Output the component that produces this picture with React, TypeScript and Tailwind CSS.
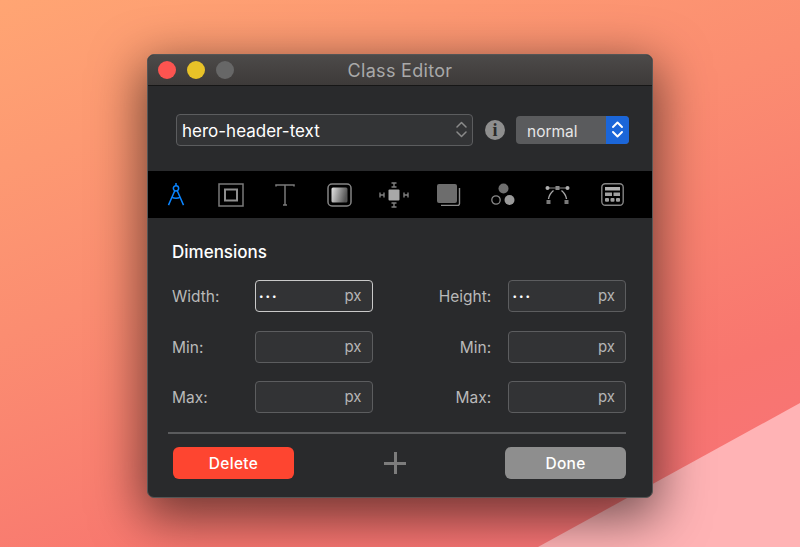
import React from "react";

const F = "font-['Inter','Liberation_Sans',sans-serif]";

function Field({ dots, active }: { dots?: boolean; active?: boolean }) {
  return (
    <div
      className={`flex h-[32px] w-[118px] items-center justify-between rounded-[4px] border-[1.5px] bg-[#323335] pl-[3px] pr-[10px] ${
        active ? "border-[#c9c9c9]" : "border-[#5c5d5f]"
      }`}
    >
      <span className="pb-[7px] text-[15px] font-bold leading-none tracking-[1.5px] text-white">{dots ? "..." : ""}</span>
      <span className="text-[15px] text-[#b5b5b5]">px</span>
    </div>
  );
}

function Row({ left, right, dots, active, mt }: { left: string; right: string; dots?: boolean; active?: boolean; mt: string }) {
  return (
    <div className={`flex items-center ${mt}`}>
      <span className="w-[83px] pt-[2px] text-[15.5px] text-[#b9b9b9]">{left}</span>
      <Field dots={dots} active={active} />
      <span className="w-[136px] pr-[17px] pt-[2px] text-right text-[15.5px] text-[#b9b9b9]">{right}</span>
      <Field dots={dots} />
    </div>
  );
}

const Compass = () => (
  <svg width="18" height="23" viewBox="0 0 20 26" fill="none" stroke="#0a84ff" strokeWidth="1.7">
    <path d="M10 0v3" />
    <circle cx="10" cy="6" r="3" />
    <path d="M8.6 8.7 1.5 25M11.4 8.7 18.5 25M5 16c3 1.5 7 1.5 10 0" />
  </svg>
);
const Box = () => (
  <svg width="26" height="24" viewBox="0 0 26 24" fill="none" stroke="#7a7a7a" strokeWidth="1.5">
    <rect x="1" y="1" width="24" height="22" />
    <rect x="7" y="6.5" width="12" height="11" stroke="#8e8e8e" strokeWidth="2" />
  </svg>
);
const TypeT = () => (
  <svg width="20" height="22" viewBox="0 0 20 22" fill="none" stroke="#7a7a7a" strokeWidth="1.5">
    <path d="M1 2.5V1h18v1.5M10 1v20M8 21h4" />
  </svg>
);
const Gradient = () => (
  <svg width="25" height="24" viewBox="0 0 25 24" fill="none">
    <defs>
      <linearGradient id="gradfill" x1="0" y1="0" x2="1" y2="0.25">
        <stop offset="0" stopColor="#e4e4e4" />
        <stop offset="1" stopColor="#555" />
      </linearGradient>
    </defs>
    <rect x="1" y="1" width="23" height="22" rx="4" stroke="#858585" strokeWidth="1.5" />
    <rect x="4.5" y="4.5" width="16" height="15" rx="1.5" fill="url(#gradfill)" />
  </svg>
);
const Spacing = () => (
  <svg width="30" height="26" viewBox="0 0 30 26" fill="none" stroke="#7f7f7f" strokeWidth="1.4">
    <rect x="9.5" y="7.5" width="11" height="11" rx="1" fill="#a8a8a8" stroke="none" />
    <path d="M12.5 1h5M15 1v4M12.5 5h5M12.5 21h5M15 21v4M12.5 25h5M1 10.5v5M1 13h4M5 10.5v5M25 10.5v5M25 13h4M29 10.5v5" />
  </svg>
);
const Shadow = () => (
  <svg width="24" height="22" viewBox="0 0 24 22" fill="none">
    <rect x="0" y="0" width="20" height="19" rx="2" fill="#6d6d6d" />
    <path d="M22.5 4v15.5a2 2 0 0 1-2 2H4" stroke="#8a8a8a" strokeWidth="1.4" />
  </svg>
);
const Circles = () => (
  <svg width="25" height="23" viewBox="0 0 25 23" fill="none">
    <circle cx="12.5" cy="5.5" r="5" fill="#6f6f6f" />
    <circle cx="5" cy="17" r="4.2" stroke="#8a8a8a" strokeWidth="1.3" />
    <circle cx="18.5" cy="17" r="5" fill="#9a9a9a" />
  </svg>
);
const Bezier = () => (
  <svg width="25" height="20" viewBox="0 0 25 20" fill="none">
    <path d="M3 3h19" stroke="#8a8a8a" strokeWidth="1" />
    <path d="M3.5 14C4 10.5 6 7.5 8.5 5.5M21.5 14C21 10.5 19 7.5 16.5 5.5" stroke="#a8a8a8" strokeWidth="1.4" />
    <circle cx="2.5" cy="3" r="2" fill="#b0b0b0" />
    <circle cx="22.5" cy="3" r="2" fill="#b0b0b0" />
    <rect x="10.5" y="1" width="4" height="4" fill="#8a8a8a" />
    <rect x="1.5" y="15" width="4" height="4" fill="#7a7a7a" />
    <rect x="19.5" y="15" width="4" height="4" fill="#7a7a7a" />
  </svg>
);
const Calc = () => (
  <svg width="23" height="23" viewBox="0 0 23 23" fill="none">
    <rect x="0.8" y="0.8" width="21.4" height="21.4" rx="3.5" stroke="#858585" strokeWidth="1.4" />
    <rect x="4" y="4" width="15" height="3.5" fill="#b0b0b0" />
    <rect x="4" y="9.5" width="7" height="3.5" fill="#a0a0a0" />
    <rect x="12.5" y="9.5" width="6.5" height="3.5" fill="#a0a0a0" />
    <rect x="4" y="15" width="4" height="3.8" rx="1" fill="#a0a0a0" />
    <rect x="9.5" y="15" width="4" height="3.8" rx="1" fill="#a0a0a0" />
    <rect x="15" y="15" width="4" height="3.8" rx="1" fill="#a0a0a0" />
  </svg>
);

const Updown = ({ color, sw = 1.5 }: { color: string; sw?: number }) => (
  <svg width="11" height="17" viewBox="0 0 11 17" fill="none" stroke={color} strokeWidth={sw} strokeLinecap="round" strokeLinejoin="round">
    <path d="M1 6 5.5 1.5 10 6M1 11 5.5 15.5 10 11" />
  </svg>
);

const toolIcons = [Compass, Box, TypeT, Gradient, Spacing, Shadow, Circles, Bezier, Calc];

export default function App() {
  return (
    <div className={`relative h-[547px] w-[800px] overflow-hidden bg-[linear-gradient(160deg,#ffa573_0%,#fb8d71_40%,#f8766f_75%,#f8727a_100%)] ${F}`}>
      <div className="absolute inset-0 bg-[#ffb3b5] [clip-path:polygon(100%_403px,100%_100%,538px_100%)]" />
      <div className="relative ml-[147px] mt-[54px] inline-flex h-[444px] w-[506px] flex-col overflow-hidden rounded-[7px] border border-[#555] bg-[#292a2c] shadow-[0_15px_50px_5px_rgba(0,0,0,0.55)]">
        <div className="relative flex h-[31px] shrink-0 items-center justify-center border-b border-[#161616] bg-[linear-gradient(180deg,#4c4a49,#3d3a39)]">
          <div className="absolute left-[10px] top-[6px] flex gap-[11px]">
            <span className="h-[18px] w-[18px] rounded-full bg-[#fc5450]" />
            <span className="h-[18px] w-[18px] rounded-full bg-[#e8c228]" />
            <span className="h-[18px] w-[18px] rounded-full bg-[#676767]" />
          </div>
          <span className="mt-[1px] text-[18px] tracking-[0.3px] text-[#a9a9a9]">Class Editor</span>
        </div>

        <div className="flex h-[85px] shrink-0 items-center pl-[28px] pt-[2px]">
          <div className="flex h-[32px] w-[297px] items-center justify-between rounded-[4px] border-[1.5px] border-[#5c5d5f] bg-[#333436] pl-[5px] pr-[5px]">
            <span className="pt-[5px] text-[17px] text-white">hero-header-text</span>
            <Updown color="#8a8a8a" />
          </div>
          <span className="ml-[12px] flex h-[20px] w-[20px] items-center justify-center rounded-full bg-[#8e8e8e] font-['Liberation_Serif',serif] text-[18px] font-bold leading-none text-[#2b2b2b]">
            i
          </span>
          <div className="ml-[11px] flex h-[28px] w-[113px] overflow-hidden rounded-[4px] bg-[#5a5b5d]">
            <span className="flex-1 pl-[11px] text-[15.5px] leading-[31px] text-[#e6e6e6]">normal</span>
            <span className="flex w-[23px] items-center justify-center bg-[#1b66d9]">
              <Updown color="#ffffff" sw={1.9} />
            </span>
          </div>
        </div>

        <div className="flex h-[47px] shrink-0 items-center bg-black pl-[1px]">
          {toolIcons.map((Icon, i) => (
            <div key={i} className="flex w-[54.5px] justify-center">
              <Icon />
            </div>
          ))}
        </div>

        <div className="flex flex-1 flex-col pl-[24px] pr-[26px]">
          <div className="mt-[22px] text-[17px] font-medium leading-[24px] text-white">Dimensions</div>
          <Row left="Width:" right="Height:" dots active mt="mt-[16px]" />
          <Row left="Min:" right="Min:" mt="mt-[19px]" />
          <Row left="Max:" right="Max:" mt="mt-[18px]" />
          <div className="-ml-[4px] mt-[19px] h-[2px] bg-[#5a5b5d]" />
          <div className="mt-[13px] flex items-center">
            <button className="ml-[1px] h-[32px] w-[121px] rounded-[6px] bg-[#fe4530] pt-[1px] text-[15.5px] font-medium tracking-[0.3px] text-white">Delete</button>
            <div className="relative ml-[90px] h-[22px] w-[22px]">
              <span className="absolute left-0 top-[10px] h-[2.5px] w-[22px] bg-[#7c7c7c]" />
              <span className="absolute left-[10px] top-0 h-[22px] w-[2.5px] bg-[#7c7c7c]" />
            </div>
            <button className="ml-auto h-[32px] w-[121px] rounded-[6px] bg-[#8e8e8e] pt-[1px] text-[15.5px] font-medium tracking-[0.3px] text-white">Done</button>
          </div>
        </div>
      </div>
    </div>
  );
}
